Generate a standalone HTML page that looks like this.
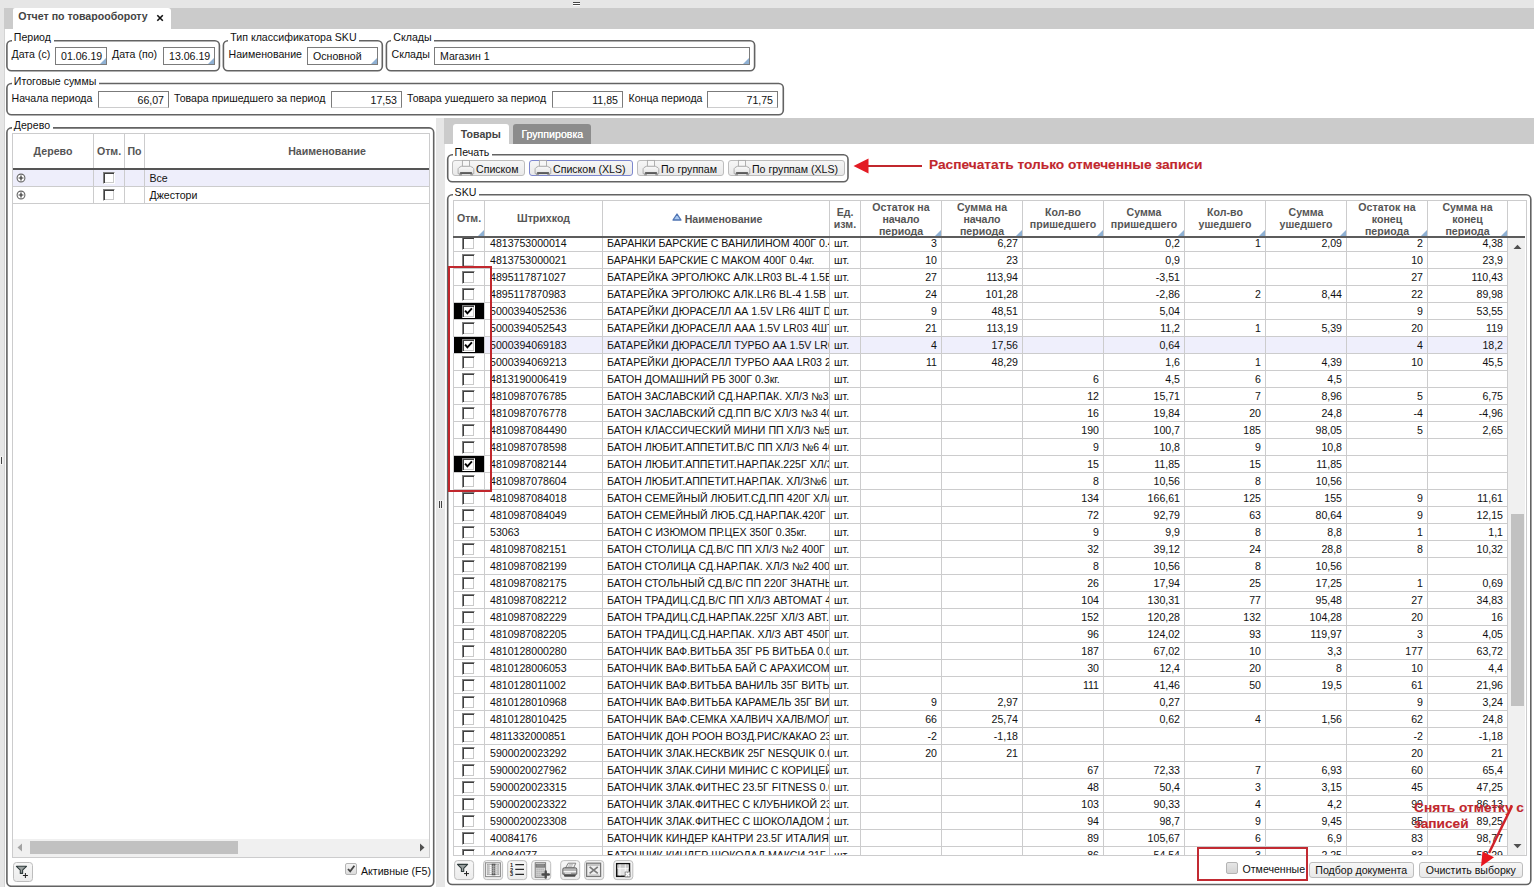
<!DOCTYPE html>
<html><head><meta charset="utf-8">
<style>
*{box-sizing:border-box;margin:0;padding:0}
html,body{width:1534px;height:887px;overflow:hidden}
body{position:relative;background:#e6e6e6;font-family:"Liberation Sans",sans-serif;font-size:10.6px;color:#111;line-height:12px}
.a{position:absolute}
.t{position:absolute;white-space:nowrap;line-height:12px}
.fs{position:absolute;border:1px solid #616161;border-radius:5px;box-shadow:0 0 1.5px rgba(60,60,60,.75), inset 0 0 1px rgba(90,90,90,.35)}
.lg{position:absolute;top:-8px;left:5px;height:13px;background:#fff;padding:0 3px 0 2px;white-space:nowrap;line-height:12px}
.in{position:absolute;height:18px;border:1px solid #7b7b7b;background:#fff;line-height:16px;padding:0 5px 0 5px;white-space:nowrap;overflow:hidden}
.in.r{text-align:right;padding-right:4px}
.in.dd:after{content:"";position:absolute;right:0;bottom:0;border-left:6px solid transparent;border-bottom:6px solid #8eb0d3}
.btn{position:absolute;height:16px;border:1px solid #bdbdbd;border-radius:3px;background:linear-gradient(#f6f6f6,#e9e9e9);white-space:nowrap;line-height:14px}
.ib{position:absolute;width:20px;height:20px;border:1px solid #bcbcbc;border-radius:3px;background:linear-gradient(#f8f8f8,#ececec)}
.cb{position:absolute;width:13px;height:13px;background:#fff;border:1px solid;border-color:#808080 #fff #fff #808080;box-shadow:inset 1px 1px 0 #404040, inset -1px -1px 0 #cacaca}
.red{color:#c1272d;font-weight:bold}
/* main grid */
#grid{position:absolute;left:453px;top:200px;width:1074px;height:656px;border:1px solid #cccccd;border-bottom-color:#cccccd;background:#fff}
#ghead{position:absolute;left:-1px;top:0;width:1056px;height:35px;overflow:hidden}
.h{position:absolute;top:0;height:35px;color:#555;font-weight:bold;text-align:center;overflow:hidden}
.ht{position:absolute;left:-10px;right:-10px;top:50%;transform:translateY(-50%);line-height:12px}
.tri{position:absolute;right:0;bottom:0;border-left:6px solid transparent;border-bottom:6px solid #8eb0d3}
.hvl{position:absolute;top:0;width:1px;height:35px;background:#cccccd}
#hline{position:absolute;left:-1px;top:34.6px;width:1072px;height:2px;background:#5c5c5c}
#gbody{position:absolute;left:-1px;top:36px;width:1055px;height:618px;overflow:hidden}
.r{position:absolute;left:0;width:1056px;height:17px;border-bottom:1px solid #cccccd}
.r.sel{background:#efeffc}
.c{position:absolute;top:0;height:16px;line-height:16px;white-space:nowrap;overflow:hidden}
.c.n{text-align:right;padding-right:4px}
.blk{position:absolute;left:1px;top:0;width:30px;height:16px;background:#000}
.vl{position:absolute;top:0;width:1px;height:618px;background:#cccccd}
</style></head><body>

<!-- top grip -->
<div class="a" style="left:573px;top:2px;width:7px;height:1px;background:#444"></div><div class="a" style="left:573px;top:3px;width:7px;height:1px;background:#fff"></div>
<div class="a" style="left:573px;top:4px;width:7px;height:1px;background:#444"></div><div class="a" style="left:573px;top:5px;width:7px;height:1px;background:#fff"></div>
<!-- left gutter grip -->
<div class="a" style="left:0;top:456px;width:3px;height:9px;background:#f2f2f2"></div><div class="a" style="left:1px;top:457px;width:1px;height:7px;background:#444"></div>

<!-- tab bar -->
<div class="a" style="left:4px;top:8px;width:1530px;height:22px;background:#cbcbcb"></div>
<div class="a" style="left:13px;top:8px;width:158px;height:22px;background:#fff;border-radius:2px 3px 0 0"></div>
<div class="t" style="left:18.2px;top:10px;font-weight:bold;color:#444">Отчет по товарообороту</div>
<svg class="a" style="left:155px;top:13.4px" width="10" height="10" viewBox="0 0 10 10"><path d="M2.3 2.3 L7.8 7.7 M7.8 2.3 L2.3 7.7" stroke="#111" stroke-width="1.6"/></svg>

<!-- main white -->
<div class="a" style="left:4px;top:29px;width:1px;height:858px;background:#d4d4d4"></div>
<div class="a" style="left:5px;top:29px;width:1529px;height:858px;background:#fff"></div>

<!-- Период -->
<svg class="a" style="left:3px;top:37px" width="220" height="37"><rect x="3.9" y="3.8" width="212.5" height="29.9" rx="4.5" ry="4.5" fill="none" stroke="#636363" stroke-width="1.6"/></svg><div class="a" style="left:11.7px;top:38.3px;width:42.1745px;height:5px;background:#fff"></div><div class="t" style="left:13.8px;top:31.2px">Период</div>
<div class="t" style="left:11.5px;top:47.6px">Дата (с)</div>
<div class="in dd" style="left:55px;top:47px;width:52px">01.06.19</div>
<div class="t" style="left:112px;top:47.6px">Дата (по)</div>
<div class="in dd" style="left:163px;top:47px;width:52px">13.06.19</div>

<svg class="a" style="left:220px;top:37px" width="166" height="37"><rect x="3.4" y="3.8" width="158.9" height="29.9" rx="4.5" ry="4.5" fill="none" stroke="#636363" stroke-width="1.6"/></svg><div class="a" style="left:228.2px;top:38.3px;width:131.307px;height:5px;background:#fff"></div><div class="t" style="left:230.3px;top:31.2px">Тип классификатора SKU</div>
<div class="t" style="left:228.5px;top:47.6px">Наименование</div>
<div class="in dd" style="left:307px;top:47px;width:71px">Основной</div>

<svg class="a" style="left:383px;top:37px" width="376" height="37"><rect x="3.4" y="3.8" width="368.2" height="29.9" rx="4.5" ry="4.5" fill="none" stroke="#636363" stroke-width="1.6"/></svg><div class="a" style="left:391.2px;top:38.3px;width:43.2942px;height:5px;background:#fff"></div><div class="t" style="left:393.3px;top:31.2px">Склады</div>
<div class="t" style="left:391.5px;top:47.6px">Склады</div>
<div class="in dd" style="left:434px;top:47px;width:316px">Магазин 1</div>

<!-- Итоговые суммы -->
<svg class="a" style="left:3px;top:80px" width="784" height="39"><rect x="3.9" y="3.5" width="776.4" height="31.2" rx="4.5" ry="4.5" fill="none" stroke="#636363" stroke-width="1.6"/></svg><div class="a" style="left:11.7px;top:81px;width:87.5392px;height:5px;background:#fff"></div><div class="t" style="left:13.8px;top:74.9px">Итоговые суммы</div>
<div class="t" style="left:11.5px;top:92px">Начала периода</div>
<div class="in r" style="left:98px;top:91px;width:71px">66,07</div>
<div class="t" style="left:174px;top:92px">Товара пришедшего за период</div>
<div class="in r" style="left:331px;top:91px;width:71px">17,53</div>
<div class="t" style="left:407px;top:92px">Товара ушедшего за период</div>
<div class="in r" style="left:552px;top:91px;width:71px">11,85</div>
<div class="t" style="left:628.5px;top:92px">Конца периода</div>
<div class="in r" style="left:707px;top:91px;width:71px">71,75</div>

<!-- Дерево -->
<svg class="a" style="left:3px;top:124px" width="434" height="766"><rect x="3.9" y="3.9" width="426.8" height="758.4" rx="4.5" ry="4.5" fill="none" stroke="#636363" stroke-width="1.6"/></svg><div class="a" style="left:11.7px;top:125.4px;width:41.2686px;height:5px;background:#fff"></div><div class="t" style="left:13.8px;top:119.3px">Дерево</div>
<div class="a" style="left:12px;top:133px;width:418px;height:725px;border:1px solid #cccccd;overflow:hidden">
  <div class="a" style="left:80px;top:0;width:1px;height:70px;background:#cccccd"></div>
  <div class="a" style="left:111px;top:0;width:1px;height:70px;background:#cccccd"></div>
  <div class="a" style="left:131px;top:0;width:1px;height:70px;background:#cccccd"></div>
  <div class="a" style="left:0;top:36px;width:416px;height:16px;background:#eeeefb"></div>
  <div class="a" style="left:0;top:34px;width:416px;height:2px;background:#555"></div>
  <div class="a" style="left:0;top:52px;width:416px;height:1px;background:#cccccd"></div>
  <div class="a" style="left:0;top:69px;width:416px;height:1px;background:#cccccd"></div>
  <div class="a" style="left:80px;top:36px;width:1px;height:33px;background:#cccccd"></div>
  <div class="a" style="left:111px;top:36px;width:1px;height:33px;background:#cccccd"></div>
  <div class="a" style="left:131px;top:36px;width:1px;height:33px;background:#cccccd"></div>
  <div class="t" style="left:0;width:80px;top:10.8px;text-align:center;font-weight:bold;color:#555">Дерево</div>
  <div class="t" style="left:81px;width:30px;top:10.8px;text-align:center;font-weight:bold;color:#555">Отм.</div>
  <div class="t" style="left:112px;width:19px;top:10.8px;text-align:center;font-weight:bold;color:#555">По</div>
  <div class="t" style="left:132px;width:364px;top:10.8px;text-align:center;font-weight:bold;color:#555">Наименование</div>
  <svg class="a" style="left:1.5px;top:37.5px" width="12" height="12" viewBox="0 0 12 12"><circle cx="6" cy="6" r="3.9" fill="#fff" stroke="#666" stroke-width="1.1"/><path d="M3.6 6H8.4M6 3.6V8.4" stroke="#333" stroke-width="1.2"/></svg>
  <svg class="a" style="left:1.5px;top:54.5px" width="12" height="12" viewBox="0 0 12 12"><circle cx="6" cy="6" r="3.9" fill="#fff" stroke="#666" stroke-width="1.1"/><path d="M3.6 6H8.4M6 3.6V8.4" stroke="#333" stroke-width="1.2"/></svg>
  <div class="cb" style="left:90px;top:38px;width:12px;height:12px"></div>
  <div class="cb" style="left:90px;top:55px;width:12px;height:12px"></div>
  <div class="t" style="left:136.5px;top:38.2px">Все</div>
  <div class="t" style="left:136.5px;top:54.8px">Джестори</div>
  <!-- h scrollbar -->
  <div class="a" style="left:0;top:705px;width:416px;height:18px;background:#f0f0f0"></div>
  <div class="a" style="left:16.5px;top:707px;width:208px;height:13px;background:#c1c1c1"></div>
  <svg class="a" style="left:4px;top:709px" width="6" height="9" viewBox="0 0 6 9"><path d="M5 0.5V8.5L0.5 4.5Z" fill="#a3a3a3"/></svg>
  <svg class="a" style="left:406px;top:709px" width="6" height="9" viewBox="0 0 6 9"><path d="M1 0.5V8.5L5.5 4.5Z" fill="#505050"/></svg>
</div>
<div class="a" style="left:345px;top:863px;width:12px;height:12px;border:1px solid #b5b5b5;border-radius:2px;background:linear-gradient(#f4f4f4,#dcdcdc)"><svg class="a" style="left:0;top:0" width="10" height="10" viewBox="0 0 10 10"><path d="M2 5L4.2 7.4L8.4 1.8" fill="none" stroke="#444" stroke-width="1.8"/></svg></div>
<div class="t" style="left:361px;top:865px">Активные (F5)</div>

<!-- splitter -->
<div class="a" style="left:436px;top:118px;width:8.8px;height:769px;background:#e6e6e6"></div>
<div class="a" style="left:438px;top:500px;width:5.5px;height:9px;background:#f0f0f0"></div><div class="a" style="left:439px;top:501px;width:1px;height:7px;background:#444"></div>
<div class="a" style="left:441.3px;top:501px;width:1px;height:7px;background:#444"></div>

<!-- right tab bar -->
<div class="a" style="left:444px;top:118px;width:1090px;height:26px;background:#cbcbcb"></div>
<div class="a" style="left:453px;top:124px;width:56px;height:20px;background:#fff;border-radius:3px 3px 0 0"></div>
<div class="t" style="left:460.8px;top:128.2px;font-weight:bold;color:#444">Товары</div>
<div class="a" style="left:513px;top:124px;width:78px;height:20px;background:#8c8c8c;border-radius:3px 3px 0 0"></div>
<div class="t" style="left:521.4px;top:128.2px;color:#fff;text-shadow:0 0 .5px #fff">Группировка</div>

<!-- Печать -->
<svg class="a" style="left:444px;top:151px" width="408" height="35"><rect x="3.7" y="3.7" width="400.3" height="27.1" rx="4.5" ry="4.5" fill="none" stroke="#636363" stroke-width="1.6"/></svg><div class="a" style="left:452.5px;top:152.2px;width:39.7216px;height:5px;background:#fff"></div><div class="t" style="left:454.6px;top:145.6px">Печать</div>
<div class="btn" style="left:452px;top:160px;width:73px;"><svg class="a" style="left:0;top:0;overflow:visible" width="24" height="15" viewBox="0 0 24 15"><defs><linearGradient id="pg" x1="0" y1="0" x2="0" y2="1"><stop offset="0" stop-color="#fafafa"/><stop offset="1" stop-color="#e2e2e2"/></linearGradient></defs><rect x="9.4" y="-0.6" width="7.1" height="6" fill="#f7f7f7" stroke="#a9a9a9" stroke-width=".9"/><path d="M8.2 5.3H17.3L20 6.7Q20.8 7.2 20.8 8.2V12.7H5.1V8.2Q5.1 7.2 5.9 6.7Z" fill="url(#pg)" stroke="#a6a6a6" stroke-width=".9" stroke-linejoin="round"/><path d="M7.6 12H18.4" stroke="#3c3c3c" stroke-width="1.5" stroke-linecap="round"/><rect x="6.2" y="12.9" width="2.7" height="1.6" fill="#9a9a9a"/><rect x="17.3" y="12.9" width="2.6" height="1.6" fill="#9a9a9a"/></svg><span class="t" style="left:23px;top:1.8px">Списком</span></div>
<div class="btn" style="left:529px;top:160px;width:104px;border-color:#7d87cf;"><svg class="a" style="left:0;top:0;overflow:visible" width="24" height="15" viewBox="0 0 24 15"><defs><linearGradient id="pg" x1="0" y1="0" x2="0" y2="1"><stop offset="0" stop-color="#fafafa"/><stop offset="1" stop-color="#e2e2e2"/></linearGradient></defs><rect x="9.4" y="-0.6" width="7.1" height="6" fill="#f7f7f7" stroke="#a9a9a9" stroke-width=".9"/><path d="M8.2 5.3H17.3L20 6.7Q20.8 7.2 20.8 8.2V12.7H5.1V8.2Q5.1 7.2 5.9 6.7Z" fill="url(#pg)" stroke="#a6a6a6" stroke-width=".9" stroke-linejoin="round"/><path d="M7.6 12H18.4" stroke="#3c3c3c" stroke-width="1.5" stroke-linecap="round"/><rect x="6.2" y="12.9" width="2.7" height="1.6" fill="#9a9a9a"/><rect x="17.3" y="12.9" width="2.6" height="1.6" fill="#9a9a9a"/></svg><span class="t" style="left:23px;top:1.8px">Списком (XLS)</span></div>
<div class="btn" style="left:637px;top:160px;width:87px;"><svg class="a" style="left:0;top:0;overflow:visible" width="24" height="15" viewBox="0 0 24 15"><defs><linearGradient id="pg" x1="0" y1="0" x2="0" y2="1"><stop offset="0" stop-color="#fafafa"/><stop offset="1" stop-color="#e2e2e2"/></linearGradient></defs><rect x="9.4" y="-0.6" width="7.1" height="6" fill="#f7f7f7" stroke="#a9a9a9" stroke-width=".9"/><path d="M8.2 5.3H17.3L20 6.7Q20.8 7.2 20.8 8.2V12.7H5.1V8.2Q5.1 7.2 5.9 6.7Z" fill="url(#pg)" stroke="#a6a6a6" stroke-width=".9" stroke-linejoin="round"/><path d="M7.6 12H18.4" stroke="#3c3c3c" stroke-width="1.5" stroke-linecap="round"/><rect x="6.2" y="12.9" width="2.7" height="1.6" fill="#9a9a9a"/><rect x="17.3" y="12.9" width="2.6" height="1.6" fill="#9a9a9a"/></svg><span class="t" style="left:23px;top:1.8px">По группам</span></div>
<div class="btn" style="left:728px;top:160px;width:117px;"><svg class="a" style="left:0;top:0;overflow:visible" width="24" height="15" viewBox="0 0 24 15"><defs><linearGradient id="pg" x1="0" y1="0" x2="0" y2="1"><stop offset="0" stop-color="#fafafa"/><stop offset="1" stop-color="#e2e2e2"/></linearGradient></defs><rect x="9.4" y="-0.6" width="7.1" height="6" fill="#f7f7f7" stroke="#a9a9a9" stroke-width=".9"/><path d="M8.2 5.3H17.3L20 6.7Q20.8 7.2 20.8 8.2V12.7H5.1V8.2Q5.1 7.2 5.9 6.7Z" fill="url(#pg)" stroke="#a6a6a6" stroke-width=".9" stroke-linejoin="round"/><path d="M7.6 12H18.4" stroke="#3c3c3c" stroke-width="1.5" stroke-linecap="round"/><rect x="6.2" y="12.9" width="2.7" height="1.6" fill="#9a9a9a"/><rect x="17.3" y="12.9" width="2.6" height="1.6" fill="#9a9a9a"/></svg><span class="t" style="left:23px;top:1.8px">По группам (XLS)</span></div>


<!-- annotation 1 -->
<svg class="a" style="left:850px;top:155px" width="80" height="22" viewBox="0 0 80 22"><path d="M18 11H72" stroke="#c1272d" stroke-width="2.2"/><path d="M3.5 11L18.5 3.6V18.4Z" fill="#e31b23"/></svg>
<div class="t red" style="left:929.3px;top:158.2px;font-size:12.4px;line-height:15px;letter-spacing:0;-webkit-text-stroke:0.1px #c1272d;transform:scaleX(1.105);transform-origin:0 0">Распечатать только отмеченные записи</div>

<!-- SKU -->
<svg class="a" style="left:444px;top:191px" width="1091" height="697"><rect x="3.7" y="3.7" width="1083.1" height="689.8" rx="4.5" ry="4.5" fill="none" stroke="#636363" stroke-width="1.6"/></svg><div class="a" style="left:452.5px;top:192.2px;width:26.7963px;height:5px;background:#fff"></div><div class="t" style="left:454.6px;top:186.4px">SKU</div>
<div id="grid">
  <div id="ghead"><div class="h" style="left:1px;width:30px"><div class="ht" style="margin-top:-0.3px">Отм.</div><div class="tri"></div></div><div class="h" style="left:32px;width:117px"><div class="ht" style="margin-top:-0.3px">Штрихкод</div></div><div class="h" style="left:150px;width:226px"><div class="ht" style="margin-top:0.5px"><svg width="10" height="8" viewBox="0 0 10 8" style="vertical-align:2px;margin-right:3px;margin-left:2px"><path d="M5 1 L9 7 L1 7 Z" fill="#a9c9f1" stroke="#4f74b3" stroke-width="1.3" stroke-linejoin="round"/></svg>Наименование</div></div><div class="h" style="left:377px;width:30px"><div class="ht" style="margin-top:-0.8px">Ед.<br>изм.</div></div><div class="h" style="left:408px;width:80px"><div class="ht" style="margin-top:0px">Остаток на<br>начало<br>периода</div><div class="tri"></div></div><div class="h" style="left:489px;width:80px"><div class="ht" style="margin-top:0px">Сумма на<br>начало<br>периода</div><div class="tri"></div></div><div class="h" style="left:570px;width:80px"><div class="ht" style="margin-top:-0.8px">Кол-во<br>пришедшего</div><div class="tri"></div></div><div class="h" style="left:651px;width:80px"><div class="ht" style="margin-top:-0.8px">Сумма<br>пришедшего</div><div class="tri"></div></div><div class="h" style="left:732px;width:80px"><div class="ht" style="margin-top:-0.8px">Кол-во<br>ушедшего</div><div class="tri"></div></div><div class="h" style="left:813px;width:80px"><div class="ht" style="margin-top:-0.8px">Сумма<br>ушедшего</div><div class="tri"></div></div><div class="h" style="left:894px;width:80px"><div class="ht" style="margin-top:0px">Остаток на<br>конец<br>периода</div><div class="tri"></div></div><div class="h" style="left:975px;width:79px"><div class="ht" style="margin-top:0px">Сумма на<br>конец<br>периода</div><div class="tri"></div></div><div class="hvl" style="left:31px"></div><div class="hvl" style="left:149px"></div><div class="hvl" style="left:376px"></div><div class="hvl" style="left:407px"></div><div class="hvl" style="left:488px"></div><div class="hvl" style="left:569px"></div><div class="hvl" style="left:650px"></div><div class="hvl" style="left:731px"></div><div class="hvl" style="left:812px"></div><div class="hvl" style="left:893px"></div><div class="hvl" style="left:974px"></div><div class="hvl" style="left:1054px"></div></div>
  <div id="gbody"><div class="r" style="top:-2px">
<div class="cb" style="left:9px;top:2px"></div>
<div class="c" style="left:32px;width:117px;padding-left:5px">4813753000014</div>
<div class="c" style="left:150px;width:226px;padding-left:4px">БАРАНКИ БАРСКИЕ С ВАНИЛИНОМ 400Г 0.4кг.</div>
<div class="c" style="left:377px;width:30px;padding-left:4px">шт.</div>
<div class="c n" style="left:408px;width:80px">3</div>
<div class="c n" style="left:489px;width:80px">6,27</div>
<div class="c n" style="left:651px;width:80px">0,2</div>
<div class="c n" style="left:732px;width:80px">1</div>
<div class="c n" style="left:813px;width:80px">2,09</div>
<div class="c n" style="left:894px;width:80px">2</div>
<div class="c n" style="left:975px;width:79px">4,38</div>
</div>
<div class="r" style="top:15px">
<div class="cb" style="left:9px;top:2px"></div>
<div class="c" style="left:32px;width:117px;padding-left:5px">4813753000021</div>
<div class="c" style="left:150px;width:226px;padding-left:4px">БАРАНКИ БАРСКИЕ С МАКОМ 400Г 0.4кг.</div>
<div class="c" style="left:377px;width:30px;padding-left:4px">шт.</div>
<div class="c n" style="left:408px;width:80px">10</div>
<div class="c n" style="left:489px;width:80px">23</div>
<div class="c n" style="left:651px;width:80px">0,9</div>
<div class="c n" style="left:894px;width:80px">10</div>
<div class="c n" style="left:975px;width:79px">23,9</div>
</div>
<div class="r" style="top:32px">
<div class="cb" style="left:9px;top:2px"></div>
<div class="c" style="left:32px;width:117px;padding-left:5px">4895117871027</div>
<div class="c" style="left:150px;width:226px;padding-left:4px">БАТАРЕЙКА ЭРГОЛЮКС АЛК.LR03 BL-4 1.5В</div>
<div class="c" style="left:377px;width:30px;padding-left:4px">шт.</div>
<div class="c n" style="left:408px;width:80px">27</div>
<div class="c n" style="left:489px;width:80px">113,94</div>
<div class="c n" style="left:651px;width:80px">-3,51</div>
<div class="c n" style="left:894px;width:80px">27</div>
<div class="c n" style="left:975px;width:79px">110,43</div>
</div>
<div class="r" style="top:49px">
<div class="cb" style="left:9px;top:2px"></div>
<div class="c" style="left:32px;width:117px;padding-left:5px">4895117870983</div>
<div class="c" style="left:150px;width:226px;padding-left:4px">БАТАРЕЙКА ЭРГОЛЮКС АЛК.LR6 BL-4 1.5В</div>
<div class="c" style="left:377px;width:30px;padding-left:4px">шт.</div>
<div class="c n" style="left:408px;width:80px">24</div>
<div class="c n" style="left:489px;width:80px">101,28</div>
<div class="c n" style="left:651px;width:80px">-2,86</div>
<div class="c n" style="left:732px;width:80px">2</div>
<div class="c n" style="left:813px;width:80px">8,44</div>
<div class="c n" style="left:894px;width:80px">22</div>
<div class="c n" style="left:975px;width:79px">89,98</div>
</div>
<div class="r" style="top:66px">
<div class="blk"></div>
<div class="cb" style="left:9px;top:2px"><svg width="9" height="9" viewBox="0 0 9 9" style="position:absolute;left:1px;top:1px"><path d="M1.1 3.6 L3.4 6.4 L7.9 1.4" fill="none" stroke="#000" stroke-width="1.9"/></svg></div>
<div class="c" style="left:32px;width:117px;padding-left:5px">5000394052536</div>
<div class="c" style="left:150px;width:226px;padding-left:4px">БАТАРЕЙКИ ДЮРАСЕЛЛ АА 1.5V LR6 4ШТ DURACELL</div>
<div class="c" style="left:377px;width:30px;padding-left:4px">шт.</div>
<div class="c n" style="left:408px;width:80px">9</div>
<div class="c n" style="left:489px;width:80px">48,51</div>
<div class="c n" style="left:651px;width:80px">5,04</div>
<div class="c n" style="left:894px;width:80px">9</div>
<div class="c n" style="left:975px;width:79px">53,55</div>
</div>
<div class="r" style="top:83px">
<div class="cb" style="left:9px;top:2px"></div>
<div class="c" style="left:32px;width:117px;padding-left:5px">5000394052543</div>
<div class="c" style="left:150px;width:226px;padding-left:4px">БАТАРЕЙКИ ДЮРАСЕЛЛ ААА 1.5V LR03 4ШТ</div>
<div class="c" style="left:377px;width:30px;padding-left:4px">шт.</div>
<div class="c n" style="left:408px;width:80px">21</div>
<div class="c n" style="left:489px;width:80px">113,19</div>
<div class="c n" style="left:651px;width:80px">11,2</div>
<div class="c n" style="left:732px;width:80px">1</div>
<div class="c n" style="left:813px;width:80px">5,39</div>
<div class="c n" style="left:894px;width:80px">20</div>
<div class="c n" style="left:975px;width:79px">119</div>
</div>
<div class="r sel" style="top:100px">
<div class="blk"></div>
<div class="cb" style="left:9px;top:2px"><svg width="9" height="9" viewBox="0 0 9 9" style="position:absolute;left:1px;top:1px"><path d="M1.1 3.6 L3.4 6.4 L7.9 1.4" fill="none" stroke="#000" stroke-width="1.9"/></svg></div>
<div class="c" style="left:32px;width:117px;padding-left:5px">5000394069183</div>
<div class="c" style="left:150px;width:226px;padding-left:4px">БАТАРЕЙКИ ДЮРАСЕЛЛ ТУРБО АА 1.5V LR6</div>
<div class="c" style="left:377px;width:30px;padding-left:4px">шт.</div>
<div class="c n" style="left:408px;width:80px">4</div>
<div class="c n" style="left:489px;width:80px">17,56</div>
<div class="c n" style="left:651px;width:80px">0,64</div>
<div class="c n" style="left:894px;width:80px">4</div>
<div class="c n" style="left:975px;width:79px">18,2</div>
</div>
<div class="r" style="top:117px">
<div class="cb" style="left:9px;top:2px"></div>
<div class="c" style="left:32px;width:117px;padding-left:5px">5000394069213</div>
<div class="c" style="left:150px;width:226px;padding-left:4px">БАТАРЕЙКИ ДЮРАСЕЛЛ ТУРБО ААА LR03 2ШТ</div>
<div class="c" style="left:377px;width:30px;padding-left:4px">шт.</div>
<div class="c n" style="left:408px;width:80px">11</div>
<div class="c n" style="left:489px;width:80px">48,29</div>
<div class="c n" style="left:651px;width:80px">1,6</div>
<div class="c n" style="left:732px;width:80px">1</div>
<div class="c n" style="left:813px;width:80px">4,39</div>
<div class="c n" style="left:894px;width:80px">10</div>
<div class="c n" style="left:975px;width:79px">45,5</div>
</div>
<div class="r" style="top:134px">
<div class="cb" style="left:9px;top:2px"></div>
<div class="c" style="left:32px;width:117px;padding-left:5px">4813190006419</div>
<div class="c" style="left:150px;width:226px;padding-left:4px">БАТОН ДОМАШНИЙ РБ 300Г 0.3кг.</div>
<div class="c" style="left:377px;width:30px;padding-left:4px">шт.</div>
<div class="c n" style="left:570px;width:80px">6</div>
<div class="c n" style="left:651px;width:80px">4,5</div>
<div class="c n" style="left:732px;width:80px">6</div>
<div class="c n" style="left:813px;width:80px">4,5</div>
</div>
<div class="r" style="top:151px">
<div class="cb" style="left:9px;top:2px"></div>
<div class="c" style="left:32px;width:117px;padding-left:5px">4810987076785</div>
<div class="c" style="left:150px;width:226px;padding-left:4px">БАТОН ЗАСЛАВСКИЙ СД.НАР.ПАК. ХЛ/З №3 400Г</div>
<div class="c" style="left:377px;width:30px;padding-left:4px">шт.</div>
<div class="c n" style="left:570px;width:80px">12</div>
<div class="c n" style="left:651px;width:80px">15,71</div>
<div class="c n" style="left:732px;width:80px">7</div>
<div class="c n" style="left:813px;width:80px">8,96</div>
<div class="c n" style="left:894px;width:80px">5</div>
<div class="c n" style="left:975px;width:79px">6,75</div>
</div>
<div class="r" style="top:168px">
<div class="cb" style="left:9px;top:2px"></div>
<div class="c" style="left:32px;width:117px;padding-left:5px">4810987076778</div>
<div class="c" style="left:150px;width:226px;padding-left:4px">БАТОН ЗАСЛАВСКИЙ СД.ПП В/С ХЛ/З №3 400Г</div>
<div class="c" style="left:377px;width:30px;padding-left:4px">шт.</div>
<div class="c n" style="left:570px;width:80px">16</div>
<div class="c n" style="left:651px;width:80px">19,84</div>
<div class="c n" style="left:732px;width:80px">20</div>
<div class="c n" style="left:813px;width:80px">24,8</div>
<div class="c n" style="left:894px;width:80px">-4</div>
<div class="c n" style="left:975px;width:79px">-4,96</div>
</div>
<div class="r" style="top:185px">
<div class="cb" style="left:9px;top:2px"></div>
<div class="c" style="left:32px;width:117px;padding-left:5px">4810987084490</div>
<div class="c" style="left:150px;width:226px;padding-left:4px">БАТОН КЛАССИЧЕСКИЙ МИНИ ПП ХЛ/З №5</div>
<div class="c" style="left:377px;width:30px;padding-left:4px">шт.</div>
<div class="c n" style="left:570px;width:80px">190</div>
<div class="c n" style="left:651px;width:80px">100,7</div>
<div class="c n" style="left:732px;width:80px">185</div>
<div class="c n" style="left:813px;width:80px">98,05</div>
<div class="c n" style="left:894px;width:80px">5</div>
<div class="c n" style="left:975px;width:79px">2,65</div>
</div>
<div class="r" style="top:202px">
<div class="cb" style="left:9px;top:2px"></div>
<div class="c" style="left:32px;width:117px;padding-left:5px">4810987078598</div>
<div class="c" style="left:150px;width:226px;padding-left:4px">БАТОН ЛЮБИТ.АППЕТИТ.В/С ПП ХЛ/З №6 400Г</div>
<div class="c" style="left:377px;width:30px;padding-left:4px">шт.</div>
<div class="c n" style="left:570px;width:80px">9</div>
<div class="c n" style="left:651px;width:80px">10,8</div>
<div class="c n" style="left:732px;width:80px">9</div>
<div class="c n" style="left:813px;width:80px">10,8</div>
</div>
<div class="r" style="top:219px">
<div class="blk"></div>
<div class="cb" style="left:9px;top:2px"><svg width="9" height="9" viewBox="0 0 9 9" style="position:absolute;left:1px;top:1px"><path d="M1.1 3.6 L3.4 6.4 L7.9 1.4" fill="none" stroke="#000" stroke-width="1.9"/></svg></div>
<div class="c" style="left:32px;width:117px;padding-left:5px">4810987082144</div>
<div class="c" style="left:150px;width:226px;padding-left:4px">БАТОН ЛЮБИТ.АППЕТИТ.НАР.ПАК.225Г ХЛ/З</div>
<div class="c" style="left:377px;width:30px;padding-left:4px">шт.</div>
<div class="c n" style="left:570px;width:80px">15</div>
<div class="c n" style="left:651px;width:80px">11,85</div>
<div class="c n" style="left:732px;width:80px">15</div>
<div class="c n" style="left:813px;width:80px">11,85</div>
</div>
<div class="r" style="top:236px">
<div class="cb" style="left:9px;top:2px"></div>
<div class="c" style="left:32px;width:117px;padding-left:5px">4810987078604</div>
<div class="c" style="left:150px;width:226px;padding-left:4px">БАТОН ЛЮБИТ.АППЕТИТ.НАР.ПАК. ХЛ/З№6</div>
<div class="c" style="left:377px;width:30px;padding-left:4px">шт.</div>
<div class="c n" style="left:570px;width:80px">8</div>
<div class="c n" style="left:651px;width:80px">10,56</div>
<div class="c n" style="left:732px;width:80px">8</div>
<div class="c n" style="left:813px;width:80px">10,56</div>
</div>
<div class="r" style="top:253px">
<div class="cb" style="left:9px;top:2px"></div>
<div class="c" style="left:32px;width:117px;padding-left:5px">4810987084018</div>
<div class="c" style="left:150px;width:226px;padding-left:4px">БАТОН СЕМЕЙНЫЙ ЛЮБИТ.СД.ПП 420Г ХЛ/З</div>
<div class="c" style="left:377px;width:30px;padding-left:4px">шт.</div>
<div class="c n" style="left:570px;width:80px">134</div>
<div class="c n" style="left:651px;width:80px">166,61</div>
<div class="c n" style="left:732px;width:80px">125</div>
<div class="c n" style="left:813px;width:80px">155</div>
<div class="c n" style="left:894px;width:80px">9</div>
<div class="c n" style="left:975px;width:79px">11,61</div>
</div>
<div class="r" style="top:270px">
<div class="cb" style="left:9px;top:2px"></div>
<div class="c" style="left:32px;width:117px;padding-left:5px">4810987084049</div>
<div class="c" style="left:150px;width:226px;padding-left:4px">БАТОН СЕМЕЙНЫЙ ЛЮБ.СД.НАР.ПАК.420Г</div>
<div class="c" style="left:377px;width:30px;padding-left:4px">шт.</div>
<div class="c n" style="left:570px;width:80px">72</div>
<div class="c n" style="left:651px;width:80px">92,79</div>
<div class="c n" style="left:732px;width:80px">63</div>
<div class="c n" style="left:813px;width:80px">80,64</div>
<div class="c n" style="left:894px;width:80px">9</div>
<div class="c n" style="left:975px;width:79px">12,15</div>
</div>
<div class="r" style="top:287px">
<div class="cb" style="left:9px;top:2px"></div>
<div class="c" style="left:32px;width:117px;padding-left:5px">53063</div>
<div class="c" style="left:150px;width:226px;padding-left:4px">БАТОН С ИЗЮМОМ ПР.ЦЕХ 350Г 0.35кг.</div>
<div class="c" style="left:377px;width:30px;padding-left:4px">шт.</div>
<div class="c n" style="left:570px;width:80px">9</div>
<div class="c n" style="left:651px;width:80px">9,9</div>
<div class="c n" style="left:732px;width:80px">8</div>
<div class="c n" style="left:813px;width:80px">8,8</div>
<div class="c n" style="left:894px;width:80px">1</div>
<div class="c n" style="left:975px;width:79px">1,1</div>
</div>
<div class="r" style="top:304px">
<div class="cb" style="left:9px;top:2px"></div>
<div class="c" style="left:32px;width:117px;padding-left:5px">4810987082151</div>
<div class="c" style="left:150px;width:226px;padding-left:4px">БАТОН СТОЛИЦА СД.В/С ПП ХЛ/З №2 400Г</div>
<div class="c" style="left:377px;width:30px;padding-left:4px">шт.</div>
<div class="c n" style="left:570px;width:80px">32</div>
<div class="c n" style="left:651px;width:80px">39,12</div>
<div class="c n" style="left:732px;width:80px">24</div>
<div class="c n" style="left:813px;width:80px">28,8</div>
<div class="c n" style="left:894px;width:80px">8</div>
<div class="c n" style="left:975px;width:79px">10,32</div>
</div>
<div class="r" style="top:321px">
<div class="cb" style="left:9px;top:2px"></div>
<div class="c" style="left:32px;width:117px;padding-left:5px">4810987082199</div>
<div class="c" style="left:150px;width:226px;padding-left:4px">БАТОН СТОЛИЦА СД.НАР.ПАК. ХЛ/З №2 400Г</div>
<div class="c" style="left:377px;width:30px;padding-left:4px">шт.</div>
<div class="c n" style="left:570px;width:80px">8</div>
<div class="c n" style="left:651px;width:80px">10,56</div>
<div class="c n" style="left:732px;width:80px">8</div>
<div class="c n" style="left:813px;width:80px">10,56</div>
</div>
<div class="r" style="top:338px">
<div class="cb" style="left:9px;top:2px"></div>
<div class="c" style="left:32px;width:117px;padding-left:5px">4810987082175</div>
<div class="c" style="left:150px;width:226px;padding-left:4px">БАТОН СТОЛЬНЫЙ СД.В/С ПП 220Г ЗНАТНЫЙ</div>
<div class="c" style="left:377px;width:30px;padding-left:4px">шт.</div>
<div class="c n" style="left:570px;width:80px">26</div>
<div class="c n" style="left:651px;width:80px">17,94</div>
<div class="c n" style="left:732px;width:80px">25</div>
<div class="c n" style="left:813px;width:80px">17,25</div>
<div class="c n" style="left:894px;width:80px">1</div>
<div class="c n" style="left:975px;width:79px">0,69</div>
</div>
<div class="r" style="top:355px">
<div class="cb" style="left:9px;top:2px"></div>
<div class="c" style="left:32px;width:117px;padding-left:5px">4810987082212</div>
<div class="c" style="left:150px;width:226px;padding-left:4px">БАТОН ТРАДИЦ.СД.В/С ПП ХЛ/З АВТОМАТ 450Г</div>
<div class="c" style="left:377px;width:30px;padding-left:4px">шт.</div>
<div class="c n" style="left:570px;width:80px">104</div>
<div class="c n" style="left:651px;width:80px">130,31</div>
<div class="c n" style="left:732px;width:80px">77</div>
<div class="c n" style="left:813px;width:80px">95,48</div>
<div class="c n" style="left:894px;width:80px">27</div>
<div class="c n" style="left:975px;width:79px">34,83</div>
</div>
<div class="r" style="top:372px">
<div class="cb" style="left:9px;top:2px"></div>
<div class="c" style="left:32px;width:117px;padding-left:5px">4810987082229</div>
<div class="c" style="left:150px;width:226px;padding-left:4px">БАТОН ТРАДИЦ.СД.НАР.ПАК.225Г ХЛ/З АВТ.</div>
<div class="c" style="left:377px;width:30px;padding-left:4px">шт.</div>
<div class="c n" style="left:570px;width:80px">152</div>
<div class="c n" style="left:651px;width:80px">120,28</div>
<div class="c n" style="left:732px;width:80px">132</div>
<div class="c n" style="left:813px;width:80px">104,28</div>
<div class="c n" style="left:894px;width:80px">20</div>
<div class="c n" style="left:975px;width:79px">16</div>
</div>
<div class="r" style="top:389px">
<div class="cb" style="left:9px;top:2px"></div>
<div class="c" style="left:32px;width:117px;padding-left:5px">4810987082205</div>
<div class="c" style="left:150px;width:226px;padding-left:4px">БАТОН ТРАДИЦ.СД.НАР.ПАК. ХЛ/З АВТ 450Г</div>
<div class="c" style="left:377px;width:30px;padding-left:4px">шт.</div>
<div class="c n" style="left:570px;width:80px">96</div>
<div class="c n" style="left:651px;width:80px">124,02</div>
<div class="c n" style="left:732px;width:80px">93</div>
<div class="c n" style="left:813px;width:80px">119,97</div>
<div class="c n" style="left:894px;width:80px">3</div>
<div class="c n" style="left:975px;width:79px">4,05</div>
</div>
<div class="r" style="top:406px">
<div class="cb" style="left:9px;top:2px"></div>
<div class="c" style="left:32px;width:117px;padding-left:5px">4810128000280</div>
<div class="c" style="left:150px;width:226px;padding-left:4px">БАТОНЧИК ВАФ.ВИТЬБА 35Г РБ ВИТЬБА 0.035</div>
<div class="c" style="left:377px;width:30px;padding-left:4px">шт.</div>
<div class="c n" style="left:570px;width:80px">187</div>
<div class="c n" style="left:651px;width:80px">67,02</div>
<div class="c n" style="left:732px;width:80px">10</div>
<div class="c n" style="left:813px;width:80px">3,3</div>
<div class="c n" style="left:894px;width:80px">177</div>
<div class="c n" style="left:975px;width:79px">63,72</div>
</div>
<div class="r" style="top:423px">
<div class="cb" style="left:9px;top:2px"></div>
<div class="c" style="left:32px;width:117px;padding-left:5px">4810128006053</div>
<div class="c" style="left:150px;width:226px;padding-left:4px">БАТОНЧИК ВАФ.ВИТЬБА БАЙ С АРАХИСОМ</div>
<div class="c" style="left:377px;width:30px;padding-left:4px">шт.</div>
<div class="c n" style="left:570px;width:80px">30</div>
<div class="c n" style="left:651px;width:80px">12,4</div>
<div class="c n" style="left:732px;width:80px">20</div>
<div class="c n" style="left:813px;width:80px">8</div>
<div class="c n" style="left:894px;width:80px">10</div>
<div class="c n" style="left:975px;width:79px">4,4</div>
</div>
<div class="r" style="top:440px">
<div class="cb" style="left:9px;top:2px"></div>
<div class="c" style="left:32px;width:117px;padding-left:5px">4810128011002</div>
<div class="c" style="left:150px;width:226px;padding-left:4px">БАТОНЧИК ВАФ.ВИТЬБА ВАНИЛЬ 35Г ВИТЬБА</div>
<div class="c" style="left:377px;width:30px;padding-left:4px">шт.</div>
<div class="c n" style="left:570px;width:80px">111</div>
<div class="c n" style="left:651px;width:80px">41,46</div>
<div class="c n" style="left:732px;width:80px">50</div>
<div class="c n" style="left:813px;width:80px">19,5</div>
<div class="c n" style="left:894px;width:80px">61</div>
<div class="c n" style="left:975px;width:79px">21,96</div>
</div>
<div class="r" style="top:457px">
<div class="cb" style="left:9px;top:2px"></div>
<div class="c" style="left:32px;width:117px;padding-left:5px">4810128010968</div>
<div class="c" style="left:150px;width:226px;padding-left:4px">БАТОНЧИК ВАФ.ВИТЬБА КАРАМЕЛЬ 35Г ВИТЬБА</div>
<div class="c" style="left:377px;width:30px;padding-left:4px">шт.</div>
<div class="c n" style="left:408px;width:80px">9</div>
<div class="c n" style="left:489px;width:80px">2,97</div>
<div class="c n" style="left:651px;width:80px">0,27</div>
<div class="c n" style="left:894px;width:80px">9</div>
<div class="c n" style="left:975px;width:79px">3,24</div>
</div>
<div class="r" style="top:474px">
<div class="cb" style="left:9px;top:2px"></div>
<div class="c" style="left:32px;width:117px;padding-left:5px">4810128010425</div>
<div class="c" style="left:150px;width:226px;padding-left:4px">БАТОНЧИК ВАФ.СЕМКА ХАЛВИЧ ХАЛВ/МОЛ</div>
<div class="c" style="left:377px;width:30px;padding-left:4px">шт.</div>
<div class="c n" style="left:408px;width:80px">66</div>
<div class="c n" style="left:489px;width:80px">25,74</div>
<div class="c n" style="left:651px;width:80px">0,62</div>
<div class="c n" style="left:732px;width:80px">4</div>
<div class="c n" style="left:813px;width:80px">1,56</div>
<div class="c n" style="left:894px;width:80px">62</div>
<div class="c n" style="left:975px;width:79px">24,8</div>
</div>
<div class="r" style="top:491px">
<div class="cb" style="left:9px;top:2px"></div>
<div class="c" style="left:32px;width:117px;padding-left:5px">4811332000851</div>
<div class="c" style="left:150px;width:226px;padding-left:4px">БАТОНЧИК ДОН РООН ВОЗД.РИС/КАКАО 23Г</div>
<div class="c" style="left:377px;width:30px;padding-left:4px">шт.</div>
<div class="c n" style="left:408px;width:80px">-2</div>
<div class="c n" style="left:489px;width:80px">-1,18</div>
<div class="c n" style="left:894px;width:80px">-2</div>
<div class="c n" style="left:975px;width:79px">-1,18</div>
</div>
<div class="r" style="top:508px">
<div class="cb" style="left:9px;top:2px"></div>
<div class="c" style="left:32px;width:117px;padding-left:5px">5900020023292</div>
<div class="c" style="left:150px;width:226px;padding-left:4px">БАТОНЧИК ЗЛАК.НЕСКВИК 25Г NESQUIK 0.025</div>
<div class="c" style="left:377px;width:30px;padding-left:4px">шт.</div>
<div class="c n" style="left:408px;width:80px">20</div>
<div class="c n" style="left:489px;width:80px">21</div>
<div class="c n" style="left:894px;width:80px">20</div>
<div class="c n" style="left:975px;width:79px">21</div>
</div>
<div class="r" style="top:525px">
<div class="cb" style="left:9px;top:2px"></div>
<div class="c" style="left:32px;width:117px;padding-left:5px">5900020027962</div>
<div class="c" style="left:150px;width:226px;padding-left:4px">БАТОНЧИК ЗЛАК.СИНИ МИНИС С КОРИЦЕЙ</div>
<div class="c" style="left:377px;width:30px;padding-left:4px">шт.</div>
<div class="c n" style="left:570px;width:80px">67</div>
<div class="c n" style="left:651px;width:80px">72,33</div>
<div class="c n" style="left:732px;width:80px">7</div>
<div class="c n" style="left:813px;width:80px">6,93</div>
<div class="c n" style="left:894px;width:80px">60</div>
<div class="c n" style="left:975px;width:79px">65,4</div>
</div>
<div class="r" style="top:542px">
<div class="cb" style="left:9px;top:2px"></div>
<div class="c" style="left:32px;width:117px;padding-left:5px">5900020023315</div>
<div class="c" style="left:150px;width:226px;padding-left:4px">БАТОНЧИК ЗЛАК.ФИТНЕС 23.5Г FITNESS 0.0235</div>
<div class="c" style="left:377px;width:30px;padding-left:4px">шт.</div>
<div class="c n" style="left:570px;width:80px">48</div>
<div class="c n" style="left:651px;width:80px">50,4</div>
<div class="c n" style="left:732px;width:80px">3</div>
<div class="c n" style="left:813px;width:80px">3,15</div>
<div class="c n" style="left:894px;width:80px">45</div>
<div class="c n" style="left:975px;width:79px">47,25</div>
</div>
<div class="r" style="top:559px">
<div class="cb" style="left:9px;top:2px"></div>
<div class="c" style="left:32px;width:117px;padding-left:5px">5900020023322</div>
<div class="c" style="left:150px;width:226px;padding-left:4px">БАТОНЧИК ЗЛАК.ФИТНЕС С КЛУБНИКОЙ 23.5Г</div>
<div class="c" style="left:377px;width:30px;padding-left:4px">шт.</div>
<div class="c n" style="left:570px;width:80px">103</div>
<div class="c n" style="left:651px;width:80px">90,33</div>
<div class="c n" style="left:732px;width:80px">4</div>
<div class="c n" style="left:813px;width:80px">4,2</div>
<div class="c n" style="left:894px;width:80px">99</div>
<div class="c n" style="left:975px;width:79px">86,13</div>
</div>
<div class="r" style="top:576px">
<div class="cb" style="left:9px;top:2px"></div>
<div class="c" style="left:32px;width:117px;padding-left:5px">5900020023308</div>
<div class="c" style="left:150px;width:226px;padding-left:4px">БАТОНЧИК ЗЛАК.ФИТНЕС С ШОКОЛАДОМ 23.5Г</div>
<div class="c" style="left:377px;width:30px;padding-left:4px">шт.</div>
<div class="c n" style="left:570px;width:80px">94</div>
<div class="c n" style="left:651px;width:80px">98,7</div>
<div class="c n" style="left:732px;width:80px">9</div>
<div class="c n" style="left:813px;width:80px">9,45</div>
<div class="c n" style="left:894px;width:80px">85</div>
<div class="c n" style="left:975px;width:79px">89,25</div>
</div>
<div class="r" style="top:593px">
<div class="cb" style="left:9px;top:2px"></div>
<div class="c" style="left:32px;width:117px;padding-left:5px">40084176</div>
<div class="c" style="left:150px;width:226px;padding-left:4px">БАТОНЧИК КИНДЕР КАНТРИ 23.5Г ИТАЛИЯ</div>
<div class="c" style="left:377px;width:30px;padding-left:4px">шт.</div>
<div class="c n" style="left:570px;width:80px">89</div>
<div class="c n" style="left:651px;width:80px">105,67</div>
<div class="c n" style="left:732px;width:80px">6</div>
<div class="c n" style="left:813px;width:80px">6,9</div>
<div class="c n" style="left:894px;width:80px">83</div>
<div class="c n" style="left:975px;width:79px">98,77</div>
</div>
<div class="r" style="top:610px">
<div class="cb" style="left:9px;top:2px"></div>
<div class="c" style="left:32px;width:117px;padding-left:5px">40084077</div>
<div class="c" style="left:150px;width:226px;padding-left:4px">БАТОНЧИК КИНДЕР ШОКОЛАД МАКСИ 21Г</div>
<div class="c" style="left:377px;width:30px;padding-left:4px">шт.</div>
<div class="c n" style="left:570px;width:80px">86</div>
<div class="c n" style="left:651px;width:80px">54,54</div>
<div class="c n" style="left:732px;width:80px">3</div>
<div class="c n" style="left:813px;width:80px">2,25</div>
<div class="c n" style="left:894px;width:80px">83</div>
<div class="c n" style="left:975px;width:79px">52,29</div>
</div><div class="vl" style="left:31px"></div><div class="vl" style="left:149px"></div><div class="vl" style="left:376px"></div><div class="vl" style="left:407px"></div><div class="vl" style="left:488px"></div><div class="vl" style="left:569px"></div><div class="vl" style="left:650px"></div><div class="vl" style="left:731px"></div><div class="vl" style="left:812px"></div><div class="vl" style="left:893px"></div><div class="vl" style="left:974px"></div><div class="vl" style="left:1054px"></div></div>
  <!-- v scrollbar -->
  <div class="a" style="left:1054px;top:36px;width:17px;height:618px;background:#f0f0f0"></div>
  <div class="a" style="left:1057px;top:313px;width:13px;height:192px;background:#c1c1c1"></div>
  <svg class="a" style="left:1059px;top:42.6px" width="9" height="6" viewBox="0 0 9 6"><path d="M0.5 5H8.5L4.5 0.8Z" fill="#505050"/></svg>
  <svg class="a" style="left:1059px;top:642px" width="9" height="6" viewBox="0 0 9 6"><path d="M0.5 1H8.5L4.5 5.2Z" fill="#505050"/></svg>
  <div id="hline"></div>
</div>

<!-- red rect around checkboxes -->
<div class="a" style="left:448px;top:265.5px;width:44px;height:226px;border:2px solid #c1272d"></div>

<!-- bottom toolbar -->
<svg class="a" style="left:0;top:850px" width="700" height="37" viewBox="0 850 700 37"><defs><linearGradient id="bg" x1="0" y1="0" x2="0" y2="1"><stop offset="0" stop-color="#f7f7f7"/><stop offset="1" stop-color="#ececec"/></linearGradient></defs><rect x="13.5" y="862.5" width="19" height="19" rx="3" fill="url(#bg)" stroke="#bdbdbd" stroke-width="1"/><path d="M16.4 866.3000000000001H26.5L22.6 870.2V873.4000000000001H20.299999999999997V870.2Z" fill="#9aa0a0" stroke="#2f3b3b" stroke-width="1.1" stroke-linejoin="round"/><path d="M22.9 875.5H27.9M25.4 873.0V878.0" stroke="#222" stroke-width="1"/><rect x="454.6" y="860.6" width="19" height="19" rx="3" fill="url(#bg)" stroke="#bdbdbd" stroke-width="1"/><path d="M457.5 864.4H467.6L463.7 868.3V871.5H461.40000000000003V868.3Z" fill="#9aa0a0" stroke="#2f3b3b" stroke-width="1.1" stroke-linejoin="round"/><path d="M464.0 873.5999999999999H469.0M466.5 871.0999999999999V876.0999999999999" stroke="#222" stroke-width="1"/><rect x="483.6" y="860.6" width="19" height="19" rx="3" fill="url(#bg)" stroke="#bdbdbd" stroke-width="1"/><rect x="485.4" y="862.8" width="15" height="13.8" fill="#f4f4f4" stroke="#8a8a8a" stroke-width="1"/><rect x="487.3" y="864.4" width="11.4" height="10.2" fill="#fff" stroke="#999" stroke-width=".8"/><rect x="487.5" y="864.6" width="2.2" height="9.8" fill="#c4c4c4"/><rect x="496.4" y="864.6" width="2.2" height="9.8" fill="#c4c4c4"/><rect x="492.2" y="864.2" width="2.7" height="10.6" fill="#9a9a9a" stroke="#4a4a4a" stroke-width=".9"/><path d="M487.5 866.6H498.6M487.5 868.6H498.6M487.5 870.6H498.6M487.5 872.6H498.6" stroke="#bbb" stroke-width=".5"/><rect x="507.7" y="860.6" width="19" height="19" rx="3" fill="url(#bg)" stroke="#bdbdbd" stroke-width="1"/><path d="M515.3 864.6H524M515.3 869.4H524M515.3 874.4H524" stroke="#2a2a2a" stroke-width="1.2"/><g font-family="Liberation Sans" font-weight="bold" font-size="5.6" fill="#222"><text x="510" y="866.6">1</text><text x="510" y="871.5">2</text><text x="510" y="876.4">3</text></g><rect x="531.7" y="860.6" width="19" height="19" rx="3" fill="url(#bg)" stroke="#bdbdbd" stroke-width="1"/><rect x="535.2" y="862.7" width="10.4" height="14.6" fill="#d6d6d6" stroke="#808080" stroke-width="1"/><rect x="536" y="864.6" width="8.8" height="2.6" fill="#8c8c8c" stroke="#666" stroke-width=".6"/><path d="M536.6 869.2H544.5M536.6 871.2H544.5M536.6 873.2H544.5M536.6 875.2H544.5" stroke="#8a8a8a" stroke-width="1" stroke-dasharray="1 1"/><path d="M542.6 874.5H548.8M545.7 871.4V877.6" stroke="#4c4c4c" stroke-width="2.4" stroke-linecap="round"/><rect x="560.7" y="860.6" width="19" height="19" rx="3" fill="url(#bg)" stroke="#bdbdbd" stroke-width="1"/><path d="M565.5 868L568.2 863.2H575.8L573.6 868Z" fill="#f1f1f1" stroke="#777" stroke-width=".9"/><path d="M567.8 866.2H572.2M568.8 864.8H573" stroke="#999" stroke-width=".7"/><path d="M562.8 869.2Q562.8 867.8 564.4 867.8H575.2Q576.8 867.8 576.8 869.2V874.2H562.8Z" fill="#b5b5b5" stroke="#5a5a5a" stroke-width=".9"/><path d="M563.6 871.6H576" stroke="#f4f4f4" stroke-width="1.3"/><path d="M563.5 874.6H576.2L575 876.8H564.5Z" fill="#4a4a4a"/><path d="M565 873.2H571" stroke="#eee" stroke-width="1"/><rect x="584.7" y="860.6" width="19" height="19" rx="3" fill="url(#bg)" stroke="#bdbdbd" stroke-width="1"/><rect x="586.6" y="863.2" width="14" height="13.2" fill="#efefef" stroke="#777" stroke-width="1.3"/><path d="M587.4 865H599.8" stroke="#aaa" stroke-width="1.2"/><path d="M589.6 866.8L597.8 873.4M597.8 866.8L589.6 873.4" stroke="#7a7a7a" stroke-width="1.7"/><path d="M588.5 875H599" stroke="#bbb" stroke-width="1"/><rect x="613.8" y="860.6" width="19" height="19" rx="3" fill="url(#bg)" stroke="#bdbdbd" stroke-width="1"/><rect x="616.7" y="863.7" width="12.8" height="12.6" fill="#e3e3e3" stroke="#111" stroke-width="1.5"/><rect x="617.5" y="864.5" width="11.2" height="3.6" fill="#c9c9c9"/><path d="M620 864.5V875.6M625.3 864.5V871.4M617.5 868.3H628.7" stroke="#fff" stroke-width=".8"/><rect x="624.6" y="871.4" width="5.9" height="6" rx="1" fill="#9a9a9a"/><path d="M625.9 872.7L629.2 876.1M629.2 872.7L625.9 876.1" stroke="#fff" stroke-width="1.4"/></svg>


<!-- Отмеченные -->
<div class="a" style="left:1226px;top:861.5px;width:12px;height:12px;border:1px solid #b4b4b4;border-radius:2px;background:linear-gradient(#e6e6e6,#d4d4d4)"></div>
<div class="t" style="left:1242.5px;top:863px">Отмеченные</div>
<div class="a" style="left:1196.5px;top:847.2px;width:111.5px;height:34.3px;border:2px solid #c22a32"></div>
<div class="btn" style="left:1309px;top:862px;width:104.5px;text-align:center">Подбор документа</div>
<div class="btn" style="left:1418.5px;top:862px;width:104.5px;text-align:center">Очистить выборку</div>

<!-- annotation 2 -->
<div class="t red" style="left:1414.3px;top:800.9px;font-size:12.4px;line-height:15.7px;letter-spacing:0;-webkit-text-stroke:0.1px #c1272d;white-space:nowrap;transform:scaleX(1.105);transform-origin:0 0">Снять отметку с<br>записей</div>
<svg class="a" style="left:1470px;top:800px" width="60" height="75" viewBox="0 0 60 75"><path d="M42 6L19 53" stroke="#d0222a" stroke-width="2.5"/><path d="M11 66.5L12.5 51.5L24 57.2Z" fill="#e8161e"/></svg>

</body></html>
